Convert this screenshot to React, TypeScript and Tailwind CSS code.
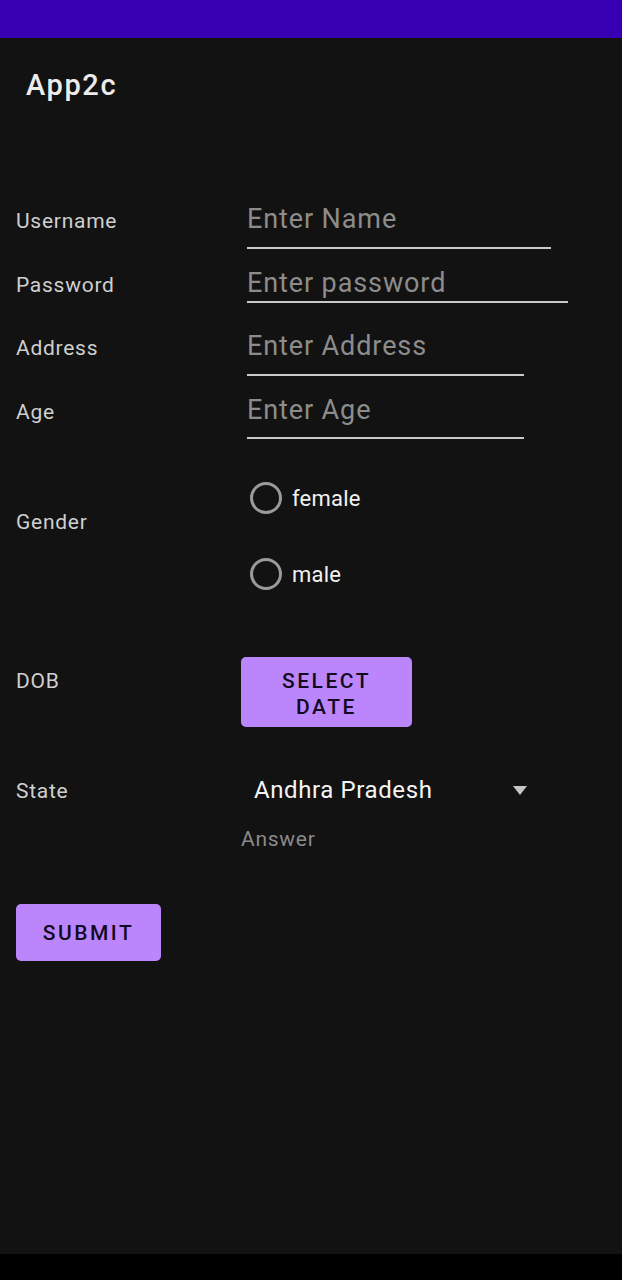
import { useState } from "react";

const font = "[font-family:Roboto,'Noto_Sans',sans-serif]";

type Field = {
  label: string;
  hint: string;
  lineWidth: string;
  gap: string;
  pad: string;
};

const fields: Field[] = [
  { label: "Username", hint: "Enter Name", lineWidth: "w-[304px]", gap: "mt-0", pad: "pb-[12px]" },
  { label: "Password", hint: "Enter password", lineWidth: "w-[321px]", gap: "mt-[17px]", pad: "pb-[2px]" },
  { label: "Address", hint: "Enter Address", lineWidth: "w-[277px]", gap: "mt-[26px]", pad: "pb-[12px]" },
  { label: "Age", hint: "Enter Age", lineWidth: "w-[277px]", gap: "mt-[17px]", pad: "pb-[11px]" },
];

function Radio({ label, checked, onClick }: { label: string; checked: boolean; onClick: () => void }) {
  return (
    <button type="button" onClick={onClick} className="flex h-[64px] items-center gap-[10px] pl-[9px]">
      <span className="flex h-[32px] w-[32px] items-center justify-center rounded-full border-[3px] border-[#9a9a9a]">
        {checked && <span className="h-[16px] w-[16px] rounded-full bg-[#bb86fc]" />}
      </span>
      <span className="mt-[1px] text-[22px] leading-[28px] tracking-[0.01em] text-[#f2f2f2]">{label}</span>
    </button>
  );
}

export default function App() {
  const [gender, setGender] = useState<string | null>(null);

  return (
    <div className={`flex min-h-[1280px] flex-col bg-black ${font}`}>
      <div className="h-[38px] bg-[#3700b3]" />
      <main className="flex flex-1 flex-col bg-[#121212]">
        <div className="pl-[26px] pt-[30px]">
          <h1 className="text-[29px] font-medium leading-[34px] tracking-[0.055em] text-[#ececec]">App2c</h1>
        </div>

        <form className="mt-[100px] flex flex-col" onSubmit={(e) => e.preventDefault()}>
          {fields.map((f) => (
            <div key={f.label} className={`flex ${f.gap}`}>
              <label className="mt-[5px] w-[241px] pl-4 text-[21px] leading-[28px] tracking-[0.035em] text-[#cfcfcf]">
                {f.label}
              </label>
              <div className={`ml-[6px] border-b-2 border-[#c9c9c9] ${f.lineWidth} ${f.pad}`}>
                <input
                  placeholder={f.hint}
                  className="mt-[1px] block h-[32px] w-full bg-transparent text-[27px] leading-[32px] tracking-[0.033em] text-white outline-none placeholder:text-[#8c8c8c]"
                />
              </div>
            </div>
          ))}

          <div className="mt-[27px] flex">
            <span className="mt-[42px] w-[241px] pl-4 text-[21px] leading-[28px] tracking-[0.035em] text-[#cfcfcf]">Gender</span>
            <div className="flex flex-col gap-[12px]">
              <Radio label="female" checked={gender === "female"} onClick={() => setGender("female")} />
              <Radio label="male" checked={gender === "male"} onClick={() => setGender("male")} />
            </div>
          </div>

          <div className="mt-[51px] flex">
            <span className="mt-[10px] w-[241px] pl-4 text-[21px] leading-[28px] tracking-[0.035em] text-[#cfcfcf]">DOB</span>
            <button
              type="button"
              className="flex h-[70px] w-[171px] items-center justify-center rounded-[5px] bg-[#bb86fc] pt-[4px] text-center text-[21px] font-medium leading-[26px] tracking-[0.12em] text-[#140a1f]"
            >
              SELECT
              <br />
              DATE
            </button>
          </div>

          <div className="mt-[35px] flex">
            <span className="mt-[15px] w-[241px] pl-4 text-[21px] leading-[28px] tracking-[0.035em] text-[#cfcfcf]">State</span>
            <div className="flex flex-col">
              <div className="flex h-[56px] w-[300px] items-center justify-between pl-[13px] pr-[14px]">
                <span className="text-[24px] leading-[30px] tracking-[0.025em] text-[#f5f5f5]">Andhra Pradesh</span>
                <svg width="14" height="9" viewBox="0 0 14 9">
                  <polygon points="0,0 14,0 7,9" fill="#c4c4c4" />
                </svg>
              </div>
              <span className="mt-[7px] text-[21px] leading-[28px] tracking-[0.035em] text-[#8a8a8a]">Answer</span>
            </div>
          </div>

          <div className="mt-[51px] pl-4">
            <button
              type="submit"
              className="h-[57px] w-[145px] rounded-[5px] bg-[#bb86fc] pt-[3px] text-[21px] font-medium tracking-[0.12em] text-[#140a1f]"
            >
              SUBMIT
            </button>
          </div>
        </form>
      </main>
      <div className="h-[26px] bg-black" />
    </div>
  );
}
